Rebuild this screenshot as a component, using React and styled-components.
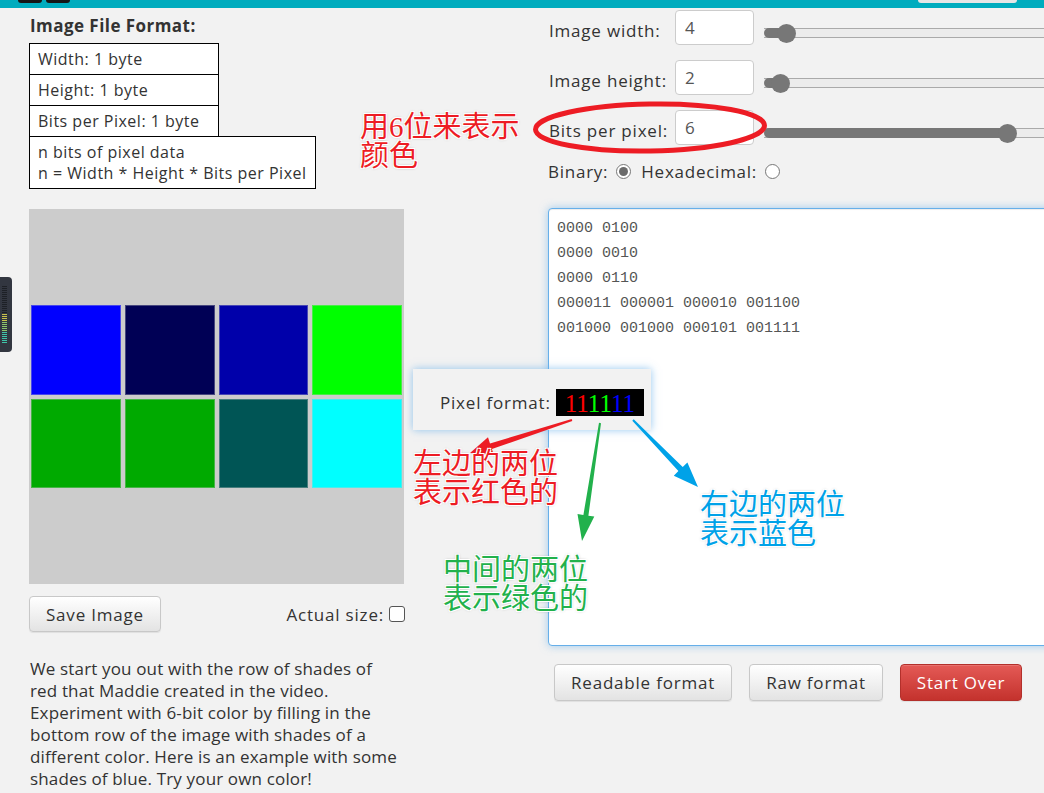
import React from 'react'
import styled, { createGlobalStyle } from 'styled-components'

const GlobalStyle = createGlobalStyle`
  html, body {
    margin: 0;
    padding: 0;
    background: #f2f2f2;
    overflow: hidden;
  }
  body {
    font-family: "Open Sans", "Noto Sans", sans-serif;
    color: #333;
  }
`

const Screen = styled.div`
  position: relative;
  width: 1044px;
  height: 793px;
  overflow: hidden;
  background: #f2f2f2;
`

const TopBar = styled.header`
  height: 8px;
  background: #00acbe;
  display: flex;
  align-items: flex-start;
  gap: 4px;
  padding: 0 0 0 18px;
`

const BarTab = styled.span`
  width: 24px;
  height: 3px;
  background: #151515;
  border-radius: 0 0 4px 4px;
`

const BarButton = styled.span`
  margin-left: auto;
  margin-right: 27px;
  width: 99px;
  height: 3px;
  background: #e6e6e6;
  border-radius: 0 0 4px 4px;
`

const Main = styled.main`
  display: flex;
  gap: 143px;
  padding-left: 29px;
`

const LeftColumn = styled.section`
  flex: none;
  width: 376px;
  display: flex;
  flex-direction: column;
`

const RightColumn = styled.section`
  flex: none;
  width: 520px;
  display: flex;
  flex-direction: column;
`

const Title = styled.h3`
  margin: 7px 0 0 1px;
  font-size: 17px;
  line-height: 21px;
  font-weight: 700;
  letter-spacing: 0.45px;
  color: #333;
`

const FormatTable = styled.div`
  margin-top: 7px;
  display: flex;
  flex-direction: column;
  align-items: flex-start;
`

const FormatBox = styled.div`
  box-sizing: border-box;
  width: ${p => (p.$wide ? 'auto' : '190px')};
  margin-top: -1px;
  padding: ${p => (p.$wide ? '5px 8px 4px' : '0 8px')};
  border: 1px solid #000;
  background: #fff;
  font-size: 16px;
  letter-spacing: 0.5px;
  line-height: ${p => (p.$wide ? '21px' : '30px')};
  color: #333;
  white-space: nowrap;
  &:first-child {
    margin-top: 0;
  }
`

const Canvas = styled.div`
  margin-top: 20px;
  width: 375px;
  height: 375px;
  background: #cccccc;
  display: flex;
  align-items: center;
  justify-content: center;
`

const PixelGrid = styled.div`
  display: grid;
  grid-template-columns: repeat(4, 93.75px);
  grid-auto-rows: 93.75px;
`

const Pixel = styled.div`
  box-sizing: border-box;
  margin: 2px;
  background: ${p => p.$color};
  border: 1px solid rgba(204, 204, 204, 0.35);
`

const ImageControls = styled.div`
  margin-top: 12px;
  display: flex;
  align-items: center;
  justify-content: space-between;
`

const Button = styled.button`
  box-sizing: border-box;
  height: ${p => (p.$tall ? '37px' : '36px')};
  padding: 0 16px;
  border-radius: 4px;
  border: 1px solid ${p => (p.$danger ? '#b3302b' : '#c8c8c8')};
  background: ${p =>
    p.$danger
      ? 'linear-gradient(#e45a56, #c4322d)'
      : 'linear-gradient(#ffffff, #e3e3e3)'};
  color: ${p => (p.$danger ? '#fff' : '#333')};
  font-family: "Open Sans", "Noto Sans", sans-serif;
  font-size: 17px;
  letter-spacing: 0.8px;
  box-shadow: inset 0 1px 0 rgba(255, 255, 255, 0.15), 0 1px 1px rgba(0, 0, 0, 0.075);
  cursor: pointer;
`

const CheckLabel = styled.label`
  display: flex;
  align-items: center;
  gap: 5px;
  font-size: 17px;
  letter-spacing: 0.8px;
  color: #333;
`

const CheckBox = styled.span`
  box-sizing: border-box;
  width: 16px;
  height: 16px;
  border: 1px solid #555;
  border-radius: 3px;
  background: #fff;
`

const Description = styled.p`
  margin: 26px 0 0 1px;
  font-size: 17px;
  letter-spacing: 0.15px;
  line-height: 22px;
  color: #333;
  white-space: nowrap;
`

const SettingRow = styled.div`
  display: flex;
  align-items: flex-start;
  height: 35px;
  margin-top: ${p => p.$first ? '2px' : '15px'};
`

const SettingLabel = styled.label`
  flex: none;
  width: 127px;
  padding: 3px 0 0 1px;
  box-sizing: border-box;
  font-size: 17px;
  letter-spacing: 0.8px;
  line-height: 35px;
  color: #333;
  white-space: nowrap;
`

const NumberBox = styled.div`
  box-sizing: border-box;
  flex: none;
  width: 79px;
  height: 35px;
  padding: 0 9px;
  border: 1px solid #ccc;
  border-radius: 4px;
  background: #fff;
  font-size: 17px;
  line-height: 33px;
  color: #555;
`

const Slider = styled.div`
  position: relative;
  flex: none;
  width: 300px;
  height: 19px;
  margin: 14px 0 0 10px;
`

const SliderTrack = styled.div`
  position: absolute;
  left: 0;
  right: 0;
  top: 4px;
  height: 10px;
  box-sizing: border-box;
  border-top: 1px solid #aaa;
  border-bottom: 1px solid #aaa;
  background: #ececec;
`

const SliderFill = styled.div`
  position: absolute;
  left: 0;
  top: 4px;
  height: 10px;
  border-radius: 5px 0 0 5px;
  background: #777;
`

const SliderThumb = styled.div`
  position: absolute;
  top: 0;
  width: 19px;
  height: 19px;
  margin-left: -9.5px;
  border-radius: 50%;
  background: #777;
`

const RadioRow = styled.div`
  margin-top: 16px;
  display: flex;
  align-items: center;
  height: 20px;
  font-size: 17px;
  letter-spacing: 0.75px;
  color: #333;
`

const RadioText = styled.span`
  margin-right: 8px;
`

const Radio = styled.span`
  box-sizing: border-box;
  width: 15px;
  height: 15px;
  margin-right: 10px;
  border-radius: 50%;
  border: 1px solid #777;
  background: #fff;
  display: flex;
  align-items: center;
  justify-content: center;
  &::after {
    content: '';
    width: 9px;
    height: 9px;
    border-radius: 50%;
    background: ${p => (p.$checked ? '#6b6b6b' : 'transparent')};
  }
`

const DataArea = styled.textarea`
  margin-top: 27px;
  box-sizing: border-box;
  width: 540px;
  height: 438px;
  padding: 7px 8px;
  border: 1px solid #66afe9;
  border-radius: 4px;
  background: #fff;
  box-shadow: inset 0 1px 1px rgba(0, 0, 0, 0.075), 0 0 8px rgba(102, 175, 233, 0.6);
  font-family: "Liberation Mono", "DejaVu Sans Mono", monospace;
  font-size: 15px;
  line-height: 25px;
  color: #555;
  resize: none;
  outline: none;
`

const ActionRow = styled.div`
  margin-top: 18px;
  padding-left: 6px;
  display: flex;
  gap: 17px;
`

const PixelFormat = styled.div`
  position: absolute;
  left: 413px;
  top: 369px;
  width: 238px;
  height: 61px;
  box-sizing: border-box;
  padding: 6px 0 0 27px;
  display: flex;
  align-items: center;
  gap: 5px;
  background: #f2f2f2;
  box-shadow: 0 0 8px rgba(102, 175, 233, 0.7);
  font-size: 17px;
  letter-spacing: 0.8px;
  color: #333;
  z-index: 2;
  white-space: nowrap;
`

const BitBox = styled.span`
  height: 27px;
  padding: 0 9px;
  background: #000;
  font-family: "Liberation Serif", serif;
  font-size: 25px;
  letter-spacing: 0;
  line-height: 29px;
`

const Bit = styled.span`
  color: ${p => p.$color};
`

const Overlay = styled.svg`
  position: absolute;
  left: 0;
  top: 0;
  pointer-events: none;
  z-index: 3;
`

const Note = styled.div`
  position: absolute;
  left: ${p => p.$x}px;
  top: ${p => p.$y}px;
  z-index: 4;
  font-family: "Liberation Serif", "Noto Sans CJK SC", serif;
  font-size: 29px;
  line-height: 29px;
  color: ${p => p.$color};
  white-space: nowrap;
  text-shadow: 1px 1px 0 #fff, -1px -1px 0 #fff, 1px -1px 0 #fff, -1px 1px 0 #fff,
    0 0 3px rgba(0, 0, 0, 0.35);
`

const LevelMeter = styled.div`
  position: absolute;
  left: 0;
  top: 277px;
  width: 12px;
  height: 75px;
  box-sizing: border-box;
  padding: 9px 0 0 2px;
  border-radius: 0 4px 4px 0;
  background: #323640;
  display: flex;
  flex-direction: column;
  gap: 1px;
`

const MeterBar = styled.span`
  width: 5px;
  height: 1px;
  background: ${p => p.$color};
`

const pixels = [
  '#0000ff', '#000055', '#0000aa', '#00ff00',
  '#00aa00', '#00aa00', '#005555', '#00ffff',
]

const settings = [
  { label: 'Image width:', value: '4', pos: 22.5 },
  { label: 'Image height:', value: '2', pos: 16 },
  { label: 'Bits per pixel:', value: '6', pos: 243.5 },
]

const meter = [
  ...Array(14).fill('#1d2026'),
  ...Array(4).fill('#c9c24a'),
  ...Array(5).fill('#8cc46a'),
  ...Array(6).fill('#3fc4a8'),
]

const binaryText = `0000 0100
0000 0010
0000 0110
000011 000001 000010 001100
001000 001000 000101 001111`

// tapered arrow: thin tail, thicker neck, triangular head
function arrow(x1, y1, x2, y2, headLen, headW, tail, neck) {
  const len = Math.hypot(x2 - x1, y2 - y1)
  const dx = (x2 - x1) / len
  const dy = (y2 - y1) / len
  const nx = -dy
  const ny = dx
  const bx = x2 - dx * headLen
  const by = y2 - dy * headLen
  const pts = [
    [x1 + nx * tail / 2, y1 + ny * tail / 2],
    [bx + nx * neck / 2, by + ny * neck / 2],
    [bx + nx * headW / 2, by + ny * headW / 2],
    [x2, y2],
    [bx - nx * headW / 2, by - ny * headW / 2],
    [bx - nx * neck / 2, by - ny * neck / 2],
    [x1 - nx * tail / 2, y1 - ny * tail / 2],
  ]
  return pts.map(p => p.map(v => v.toFixed(1)).join(',')).join(' ')
}

const App = () => {
  return (
    <Screen>
      <GlobalStyle />
      <TopBar>
        <BarTab />
        <BarTab />
        <BarButton />
      </TopBar>

      <Main>
        <LeftColumn>
          <Title>Image File Format:</Title>
          <FormatTable>
            <FormatBox>Width: 1 byte</FormatBox>
            <FormatBox>Height: 1 byte</FormatBox>
            <FormatBox>Bits per Pixel: 1 byte</FormatBox>
            <FormatBox $wide>
              n bits of pixel data
              <br />
              n = Width * Height * Bits per Pixel
            </FormatBox>
          </FormatTable>

          <Canvas>
            <PixelGrid>
              {pixels.map((c, i) => (
                <Pixel key={i} $color={c} />
              ))}
            </PixelGrid>
          </Canvas>

          <ImageControls>
            <Button>Save Image</Button>
            <CheckLabel>
              Actual size:
              <CheckBox />
            </CheckLabel>
          </ImageControls>

          <Description>
            We start you out with the row of shades of
            <br />
            red that Maddie created in the video.
            <br />
            Experiment with 6-bit color by filling in the
            <br />
            bottom row of the image with shades of a
            <br />
            different color. Here is an example with some
            <br />
            shades of blue. Try your own color!
          </Description>
        </LeftColumn>

        <RightColumn>
          {settings.map((s, i) => (
            <SettingRow key={s.label} $first={i === 0}>
              <SettingLabel>{s.label}</SettingLabel>
              <NumberBox>{s.value}</NumberBox>
              <Slider>
                <SliderTrack />
                <SliderFill style={{ width: s.pos }} />
                <SliderThumb style={{ left: s.pos }} />
              </Slider>
            </SettingRow>
          ))}

          <RadioRow>
            <RadioText>Binary:</RadioText>
            <Radio $checked />
            <RadioText>Hexadecimal:</RadioText>
            <Radio />
          </RadioRow>

          <DataArea defaultValue={binaryText} spellCheck={false} />

          <ActionRow>
            <Button $tall>Readable format</Button>
            <Button $tall>Raw format</Button>
            <Button $tall $danger>Start Over</Button>
          </ActionRow>
        </RightColumn>
      </Main>

      <PixelFormat>
        Pixel format:
        <BitBox>
          <Bit $color="#ff0000">11</Bit>
          <Bit $color="#00ff00">11</Bit>
          <Bit $color="#0000ff">11</Bit>
        </BitBox>
      </PixelFormat>

      <Overlay width="1044" height="793" viewBox="0 0 1044 793">
        <ellipse
          cx="650"
          cy="127.5"
          rx="114.5"
          ry="23.5"
          fill="none"
          stroke="#ed1c24"
          strokeWidth="5"
          transform="rotate(-1 650 127.5)"
        />
        <polygon points={arrow(572, 420, 470, 453, 22, 19, 2, 6)} fill="#ed1c24" />
        <polygon points={arrow(600, 423, 582, 541, 26, 17, 2, 5)} fill="#22b14c" />
        <polygon points={arrow(633, 420, 698, 487, 25, 19, 2, 6)} fill="#00a2e8" />
      </Overlay>

      <Note $x={360} $y={113} $color="#ed1c24">
        用6位来表示
        <br />
        颜色
      </Note>
      <Note $x={413} $y={450} $color="#ed1c24">
        左边的两位
        <br />
        表示红色的
      </Note>
      <Note $x={443} $y={556} $color="#22b14c">
        中间的两位
        <br />
        表示绿色的
      </Note>
      <Note $x={700} $y={491} $color="#00a2e8">
        右边的两位
        <br />
        表示蓝色
      </Note>

      <LevelMeter>
        {meter.map((c, i) => (
          <MeterBar key={i} $color={c} />
        ))}
      </LevelMeter>
    </Screen>
  )
}

export default App
